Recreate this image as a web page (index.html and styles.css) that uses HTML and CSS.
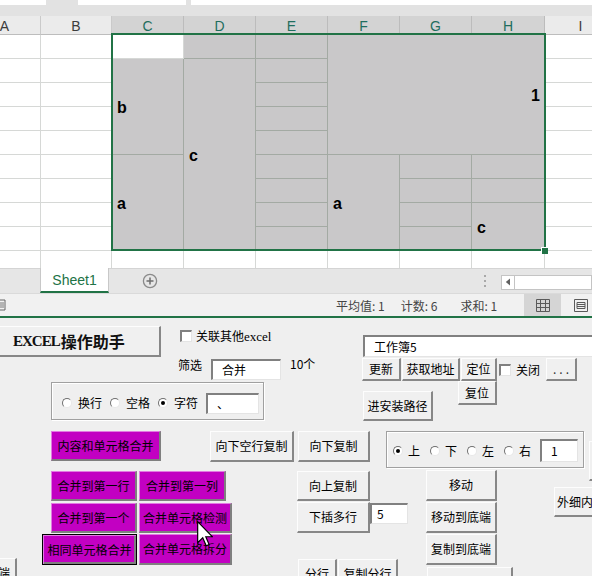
FILE: index.html
```html
<!DOCTYPE html>
<html lang="zh-CN">
<head>
<meta charset="utf-8">
<title>EXCEL操作助手</title>
<link rel="stylesheet" href="styles.css">
</head>
<body>
<div class="app">
  <div class="topbar">
    <div class="tb-box tb-name"></div>
    <div class="tb-box tb-mid"></div>
    <div class="tb-box tb-formula"></div>
  </div>

  <div class="sheet">
    <div class="cols">
      <div class="ch">A</div>
      <div class="ch">B</div>
      <div class="ch sel">C</div>
      <div class="ch sel">D</div>
      <div class="ch sel">E</div>
      <div class="ch sel">F</div>
      <div class="ch sel">G</div>
      <div class="ch sel">H</div>
      <div class="ch">I</div>
    </div>
    <div class="grid">
      <!-- row 1 -->
      <div class="c"></div><div class="c"></div>
      <div class="c"></div>
      <div class="c g"></div>
      <div class="c g"></div>
      <div class="c g t r span-fgh">1</div>
      <div class="c"></div>
      <!-- row 2 -->
      <div class="c"></div><div class="c"></div>
      <div class="c g t span-4">b</div>
      <div class="c g t span-8">c</div>
      <div class="c g"></div>
      <div class="c"></div>
      <!-- row 3 -->
      <div class="c"></div><div class="c"></div>
      <div class="c g"></div>
      <div class="c"></div>
      <!-- row 4 -->
      <div class="c"></div><div class="c"></div>
      <div class="c g"></div>
      <div class="c"></div>
      <!-- row 5 -->
      <div class="c"></div><div class="c"></div>
      <div class="c g"></div>
      <div class="c"></div>
      <!-- row 6 -->
      <div class="c"></div><div class="c"></div>
      <div class="c g t span-4">a</div>
      <div class="c g"></div>
      <div class="c g t span-4">a</div>
      <div class="c g"></div>
      <div class="c g"></div>
      <div class="c"></div>
      <!-- row 7 -->
      <div class="c"></div><div class="c"></div>
      <div class="c g"></div>
      <div class="c g"></div>
      <div class="c g"></div>
      <div class="c"></div>
      <!-- row 8 -->
      <div class="c"></div><div class="c"></div>
      <div class="c g"></div>
      <div class="c g"></div>
      <div class="c g t span-2">c</div>
      <div class="c"></div>
      <!-- row 9 -->
      <div class="c"></div><div class="c"></div>
      <div class="c g"></div>
      <div class="c g"></div>
      <div class="c"></div>
      <!-- row 10 -->
      <div class="c"></div><div class="c"></div><div class="c"></div>
      <div class="c"></div><div class="c"></div><div class="c"></div>
      <div class="c"></div><div class="c"></div><div class="c"></div>
    </div>
    <div class="selection"><span class="handle"></span></div>
  </div>

  <div class="tabbar">
    <div class="tab">Sheet1</div>
    <svg class="addsheet" width="16" height="16" viewBox="0 0 16 16">
      <circle cx="8" cy="8" r="6.6" fill="none" stroke="#8a8a8a" stroke-width="1.3"/>
      <path d="M8 4.5v7M4.5 8h7" stroke="#6e6e6e" stroke-width="1.5"/>
    </svg>
    <div class="vdots"><i></i><i></i><i></i></div>
    <div class="hscroll">
      <div class="hs-left">
        <svg width="6" height="8" viewBox="0 0 6 8"><path d="M5 0.5v7L0.8 4z" fill="#606060"/></svg>
      </div>
      <div class="hs-track"></div>
    </div>
  </div>

  <div class="statusbar">
    <svg class="st-left" width="6" height="12" viewBox="0 0 6 12">
      <path d="M-4 1h9v10h-9" fill="none" stroke="#666" stroke-width="1"/>
      <path d="M-2 4h6M-2 6h6M-2 8h6" stroke="#777" stroke-width="1"/>
    </svg>
    <span class="st st-avg">平均值: 1</span>
    <span class="st st-cnt">计数: 6</span>
    <span class="st st-sum">求和: 1</span>
    <div class="view-normal">
      <svg width="14" height="13" viewBox="0 0 14 13">
        <path d="M0.5 0.5h13v12h-13zM0.5 4.5h13M0.5 8.5h13M4.5 0.5v12M9.5 0.5v12" fill="none" stroke="#5a5a5a" stroke-width="1"/>
      </svg>
    </div>
    <svg class="view-page" width="14" height="13" viewBox="0 0 14 13">
      <path d="M0.5 0.5h13v12h-13z" fill="none" stroke="#5a5a5a" stroke-width="1"/>
      <path d="M3 3.5h8v6h-8z" fill="none" stroke="#5a5a5a" stroke-width="1"/>
      <path d="M3 5.5h8M3 7.5h8" stroke="#5a5a5a" stroke-width="1"/>
    </svg>
  </div>
  <div class="winedge"></div>

  <div class="form">
    <div class="btn title"><span class="lat">EXCEL</span>操作助手</div>

    <span class="chk chk-link"></span>
    <span class="lbl lbl-link">关联其他<span class="serif">excel</span></span>

    <span class="lbl lbl-filter">筛选</span>
    <div class="txt txt-filter">合并</div>
    <span class="lbl lbl-count">10个</span>

    <div class="frame frame1">
      <span class="radio"></span><span class="rl rl2">换行</span>
      <span class="radio"></span><span class="rl rl2">空格</span>
      <span class="radio on"></span><span class="rl rl2">字符</span>
      <div class="txt txt-sep">、</div>
    </div>

    <div class="btn mag m-content">内容和单元格合并</div>
    <div class="btn b-downblank">向下空行复制</div>
    <div class="btn b-downcopy">向下复制</div>

    <div class="btn mag m-row">合并到第一行</div>
    <div class="btn mag m-col">合并到第一列</div>
    <div class="btn mag m-first">合并到第一个</div>
    <div class="btn mag m-check">合并单元格检测</div>
    <div class="btn mag focus m-same">相同单元格合并</div>
    <div class="btn mag m-split">合并单元格拆分</div>
    <div class="btn b-end">底端</div>

    <div class="txt txt-wb">工作簿5</div>
    <div class="btn b-update">更新</div>
    <div class="btn b-addr">获取地址</div>
    <div class="btn b-locate">定位</div>
    <div class="btn b-reset">复位</div>
    <span class="chk chk-close"></span>
    <span class="lbl lbl-close">关闭</span>
    <div class="btn b-more">...</div>
    <div class="btn b-path">进安装路径</div>

    <div class="frame frame2">
      <span class="radio on"></span><span class="rl rl1">上</span>
      <span class="radio"></span><span class="rl rl1">下</span>
      <span class="radio"></span><span class="rl rl1">左</span>
      <span class="radio"></span><span class="rl rl1">右</span>
      <div class="txt txt-step">1</div>
    </div>
    <div class="btn b-edge"></div>

    <div class="btn b-upcopy">向上复制</div>
    <div class="btn b-insert">下插多行</div>
    <div class="txt txt-rows">5</div>
    <div class="btn b-move">移动</div>
    <div class="btn b-movebottom">移动到底端</div>
    <div class="btn b-copybottom">复制到底端</div>
    <div class="btn b-border">外细内粗</div>
    <div class="btn b-split">分行</div>
    <div class="btn b-copysplit">复制分行</div>
    <div class="btn b-blank"></div>

    <svg class="cursor" width="16" height="26" viewBox="0 0 12 19.5">
      <path d="M0.5 0.5V16.3L4.3 12.6L6.9 18.6L9.1 17.7L6.6 11.8H11.6Z" fill="#fff" stroke="#000" stroke-width="0.9" stroke-linejoin="miter"/>
    </svg>
  </div>
</div>
</body>
</html>
```

FILE: styles.css
```css
* { box-sizing: border-box; margin: 0; padding: 0; }
html, body { width: 592px; height: 576px; overflow: hidden; }
body {
  font-family: "Liberation Sans", "Noto Sans CJK SC", sans-serif;
  background: #efefef;
}
.app { width: 592px; height: 576px; overflow: hidden; }

/* formula bar strip */
.topbar { height: 16px; background: #e2e2e2; display: flex; align-items: flex-start; }
.tb-box { height: 5px; background: #fff; }
.tb-name { width: 46px; }
.tb-mid { width: 108px; margin-left: 32px; }
.tb-formula { flex: 1; margin-left: 5px; }

/* sheet */
.sheet { position: relative; width: 592px; overflow: hidden; }
.cols, .grid {
  display: grid;
  grid-template-columns: 72px 71px 72px 72px 72px 72px 72px 73px 72px;
  width: 648px;
  margin-left: -31px;
}
.cols { height: 19px; }
.ch {
  background: #ebebeb;
  border-right: 1px solid #cacaca;
  border-bottom: 1px solid #bdbdbd;
  font-size: 14px;
  color: #3c3c3c;
  display: flex;
  align-items: center;
  justify-content: center;
  padding-top: 1px;
}
.ch.sel { background: #d3d3d3; color: #1f6e5e; border-right-color: #bcbcbc; }

.grid { grid-template-rows: repeat(10, 24px); height: 233px; overflow: hidden; background: #fff; }
.c { background: #fff; border-right: 1px solid #d6d8d6; border-bottom: 1px solid #d6d8d6; }
.c.g { background: #c9c8c9; border-right-color: #a3aaa3; border-bottom-color: #a3aaa3; }
.t {
  display: flex;
  align-items: center;
  padding: 2px 4px 0 5px;
  font-size: 16px;
  font-weight: bold;
  color: #000;
}
.r { justify-content: flex-end; padding-right: 4px; }
.span-2 { grid-row: span 2; }
.span-4 { grid-row: span 4; }
.span-8 { grid-row: span 8; }
.span-fgh { grid-column: span 3; grid-row: span 5; }

.selection {
  position: absolute;
  left: 111px;
  top: 17px;
  width: 435px;
  height: 218px;
  border: 2px solid #217346;
}
.handle {
  position: absolute;
  right: -4px;
  bottom: -5px;
  width: 7px;
  height: 7px;
  background: #217346;
  border-left: 1px solid #fff;
  border-top: 1px solid #fff;
}

/* sheet tabs */
.tabbar {
  height: 25px;
  background: #e6e6e6;
  border-top: 1px solid #d4d4d4;
  display: flex;
  align-items: center;
  position: relative;
}
.tab {
  align-self: stretch;
  margin-top: -1px;
  margin-left: 40px;
  width: 69px;
  background: #fff;
  border-left: 1px solid #c8c8c8;
  border-right: 1px solid #c8c8c8;
  border-bottom: 2px solid #217346;
  color: #217346;
  font-size: 14px;
  display: flex;
  align-items: center;
  justify-content: center;
  padding-top: 1px;
}
.addsheet { margin-left: 33px; }
.vdots {
  margin-left: 326px;
  display: flex;
  flex-direction: column;
  gap: 3px;
}
.vdots i { display: block; width: 2px; height: 2px; background: #a8a8a8; }
.hscroll {
  margin-left: 15px;
  flex: 1;
  height: 15px;
  display: flex;
  margin-top: 2px;
}
.hs-left {
  width: 14px;
  background: #fff;
  border: 1px solid #c4c4c4;
  display: flex;
  align-items: center;
  justify-content: center;
}
.hs-track { flex: 1; background: #fff; border: 1px solid #c4c4c4; border-left: 0; }

/* status bar */
.statusbar {
  height: 23px;
  background: #f1f1f1;
  border-top: 1px solid #dadada;
  display: flex;
  align-items: center;
  font-family: "Noto Sans CJK SC", "Liberation Sans", sans-serif;
  font-size: 12px;
  color: #444;
}
.st-left { flex: none; }
.st { white-space: nowrap; }
.st-avg { margin-left: 330px; }
.st-cnt { margin-left: 16px; }
.st-sum { margin-left: 23px; }
.view-normal {
  margin-left: 27px;
  width: 37px;
  align-self: stretch;
  background: #d5d5d5;
  display: flex;
  align-items: center;
  justify-content: center;
}
.view-page { margin-left: 13px; }
.winedge { height: 2px; background: #217346; }

/* user form */
.form {
  position: relative;
  height: 258px;
  background: #efefef;
  font-family: "Noto Sans CJK SC", "Liberation Sans", sans-serif;
  font-size: 12px;
  color: #000;
  overflow: hidden;
}
.btn {
  position: absolute;
  display: flex;
  align-items: center;
  justify-content: center;
  background: #f0f0f0;
  border-style: solid;
  border-width: 1px 2px 2px 1px;
  border-color: #fdfdfd #878787 #878787 #fdfdfd;
  white-space: nowrap;
  overflow: hidden;
  line-height: 1;
}
.btn.mag { background: #c200c2; border-color: #e27ae2 #7f7f7f #7f7f7f #e27ae2; }
.btn.focus {
  border: 1px solid #000;
  box-shadow: inset 1px 1px 0 #e27ae2, inset -2px -2px 0 #7f7f7f;
}
.txt {
  position: absolute;
  background: #fff;
  border-style: solid;
  border-width: 2px 1px 1px 2px;
  border-color: #808080 #e4e4e4 #e4e4e4 #808080;
  display: flex;
  align-items: center;
  padding-left: 9px;
  line-height: 1;
  white-space: nowrap;
  overflow: hidden;
}
.lbl { position: absolute; line-height: 14px; white-space: nowrap; }
.serif { font-family: "Liberation Serif", serif; font-size: 13px; }
.chk {
  position: absolute;
  width: 12px;
  height: 12px;
  background: #fff;
  border-style: solid;
  border-width: 2px 1px 1px 2px;
  border-color: #808080 #e4e4e4 #e4e4e4 #808080;
}
.frame {
  position: absolute;
  border: 1px solid #a0a0a0;
  box-shadow: inset 1px 1px 0 #fff, 1px 1px 0 #fff;
  display: flex;
  align-items: center;
}
.radio {
  flex: none;
  position: relative;
  width: 10px;
  height: 10px;
  border-radius: 50%;
  background: #fff;
  border: 1px solid;
  border-color: #6f6f6f #e8e8e8 #e8e8e8 #6f6f6f;
}
.radio.on::after {
  content: "";
  position: absolute;
  left: 2px;
  top: 2px;
  width: 4px;
  height: 4px;
  border-radius: 50%;
  background: #000;
}
.rl { flex: none; line-height: 1; }
.rl2 { width: 24px; margin-left: 6px; margin-right: 8px; }
.rl2:nth-of-type(3) { margin-right: 9px; }
.rl1 { width: 12px; margin-left: 5px; margin-right: 10px; }

/* control placement on the form canvas */
.title {
  left: -3px; top: 8px; width: 164px; height: 31px;
  justify-content: flex-start;
  padding-left: 15px;
  font-size: 16px;
  font-weight: bold;
  color: #111;
}
.lat { font-family: "Liberation Serif", serif; font-size: 15px; letter-spacing: -1px; margin-right: 1px; }
.chk-link { left: 180px; top: 12px; }
.lbl-link { left: 196px; top: 11px; }
.lbl-filter { left: 178px; top: 40px; }
.txt-filter { left: 211px; top: 41px; width: 70px; height: 21px; }
.lbl-count { left: 290px; top: 39px; }

.frame1 { left: 51px; top: 64px; width: 213px; height: 38px; padding-left: 10px; padding-top: 4px; }
.txt-sep { position: static; width: 53px; height: 21px; }

.m-content { left: 51px; top: 113px; width: 110px; height: 30px; }
.b-downblank { left: 210px; top: 113px; width: 84px; height: 31px; }
.b-downcopy { left: 298px; top: 113px; width: 72px; height: 31px; }

.m-row { left: 51px; top: 153px; width: 86px; height: 30px; }
.m-col { left: 139px; top: 153px; width: 87px; height: 30px; }
.m-first { left: 51px; top: 185px; width: 86px; height: 30px; }
.m-check { left: 139px; top: 185px; width: 93px; height: 30px; }
.m-same { left: 42px; top: 216px; width: 95px; height: 31px; }
.m-split { left: 139px; top: 216px; width: 93px; height: 31px; }
.b-end { left: -20px; top: 240px; width: 37px; height: 30px; }

.txt-wb { left: 363px; top: 17px; width: 240px; height: 22px; }
.b-update { left: 362px; top: 40px; width: 39px; height: 23px; }
.b-addr { left: 402px; top: 40px; width: 58px; height: 23px; }
.b-locate { left: 461px; top: 40px; width: 36px; height: 23px; }
.b-reset { left: 458px; top: 63px; width: 39px; height: 24px; }
.chk-close { left: 499px; top: 46px; width: 12px; height: 12px; }
.lbl-close { left: 516px; top: 45px; }
.b-more { left: 546px; top: 40px; width: 31px; height: 23px; letter-spacing: 3px; padding-left: 3px; color: #333; }
.b-path { left: 363px; top: 73px; width: 70px; height: 30px; }

.frame2 { left: 386px; top: 113px; width: 198px; height: 37px; padding-left: 6px; padding-top: 2px; }
.txt-step { position: static; width: 38px; height: 23px; margin-left: -1px; }
.b-edge { left: 589px; top: 123px; width: 40px; height: 40px; }

.b-upcopy { left: 297px; top: 153px; width: 73px; height: 30px; }
.b-insert { left: 297px; top: 184px; width: 73px; height: 31px; }
.txt-rows { left: 370px; top: 185px; width: 38px; height: 21px; padding-left: 5px; }
.b-move { left: 426px; top: 152px; width: 71px; height: 31px; }
.b-movebottom { left: 426px; top: 184px; width: 71px; height: 31px; }
.b-copybottom { left: 426px; top: 216px; width: 71px; height: 31px; }
.b-border { left: 554px; top: 169px; width: 70px; height: 30px; justify-content: flex-start; padding-left: 2px; }
.b-split { left: 298px; top: 241px; width: 39px; height: 30px; }
.b-copysplit { left: 338px; top: 241px; width: 60px; height: 30px; }
.b-blank { left: 427px; top: 249px; width: 86px; height: 30px; }

.cursor { position: absolute; left: 197px; top: 203px; }
```
